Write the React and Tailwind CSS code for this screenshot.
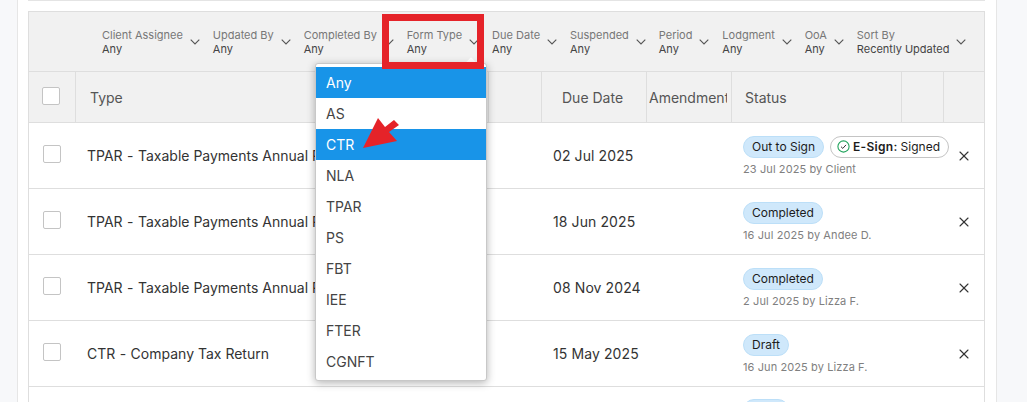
import React from "react";
import { X } from "lucide-react";

const filters = [
  { label: "Client Assignee", value: "Any" },
  { label: "Updated By", value: "Any" },
  { label: "Completed By", value: "Any" },
  { label: "Form Type", value: "Any" },
  { label: "Due Date", value: "Any" },
  { label: "Suspended", value: "Any" },
  { label: "Period", value: "Any" },
  { label: "Lodgment", value: "Any" },
  { label: "OoA", value: "Any" },
  { label: "Sort By", value: "Recently Updated" },
];

const rows = [
  { code: "TPAR", name: "Taxable Payments Annual Report", due: "02 Jul 2025", status: "Out to Sign", esign: true, note: "23 Jul 2025 by Client" },
  { code: "TPAR", name: "Taxable Payments Annual Report", due: "18 Jun 2025", status: "Completed", note: "16 Jul 2025 by Andee D." },
  { code: "TPAR", name: "Taxable Payments Annual Report", due: "08 Nov 2024", status: "Completed", note: "2 Jul 2025 by Lizza F." },
  { code: "CTR", name: "Company Tax Return", due: "15 May 2025", status: "Draft", note: "16 Jun 2025 by Lizza F." },
];

const options = ["Any", "AS", "CTR", "NLA", "TPAR", "PS", "FBT", "IEE", "FTER", "CGNFT"];

const Checkbox = ({ className }) => (
  <div className={`w-[18px] h-[18px] rounded-[2px] bg-white border border-[#c4c4c4] shrink-0 ${className}`} />
);

const Pill = ({ children }) => (
  <span className="inline-flex h-[22px] px-[8px] items-center rounded-full bg-[#cfe8fb] border border-[#bcdff8] text-[12px] text-[#1c1c1c] whitespace-nowrap">
    {children}
  </span>
);

const App = () => {
  return (
    <div className="relative w-[1027px] h-[402px] overflow-hidden bg-[#f7f8fa] text-[#444] font-['Inter',sans-serif]">
      <div className="ml-[17px] w-[980px] h-[402px] bg-white border-x border-[#e6e6e6] pl-[10px] pr-[11px]">
        <div className="h-[1px] bg-[#e4e4e4]" />
        <div className="mt-[10px] border-x border-[#dedede]">
          {/* filter bar */}
          <div className="h-[61px] flex items-center bg-[#f1f1f1] border-y border-[#dedede] pl-[73px]">
            {filters.map((f) => (
              <div key={f.label} className="flex items-center mr-[12.9px] whitespace-nowrap">
                <div className="text-[11px] leading-[14px]">
                  <div className="text-[#777]">{f.label}</div>
                  <div className="text-[#444]">{f.value}</div>
                </div>
                <svg width="10" height="6" viewBox="0 0 10 6" fill="none" className="ml-[7px] shrink-0">
                  <path d="M0.7 0.7 L5 5 L9.3 0.7" stroke="#555" strokeWidth="1.1" />
                </svg>
              </div>
            ))}
          </div>

          {/* column headers */}
          <div className="h-[51px] flex items-stretch bg-[#f1f1f1] border-b border-[#dedede] text-[14px] text-[#555]">
            <div className="w-[47px] flex items-center justify-center border-r border-[#dedede]">
              <Checkbox className="mb-[2px] mr-[2px]" />
            </div>
            <div className="w-[413px] flex items-center pl-[14px] border-r border-[#dedede]">Type</div>
            <div className="w-[53px] border-r border-[#dedede]" />
            <div className="w-[105px] flex items-center pl-[20px] border-r border-[#dedede]">Due Date</div>
            <div className="w-[85px] flex items-center pl-[2px] pr-[4px] border-r border-[#dedede]">
              <span className="overflow-hidden whitespace-nowrap">Amendment</span>
            </div>
            <div className="w-[170px] flex items-center pl-[13px] border-r border-[#dedede]">Status</div>
            <div className="w-[42px] border-r border-[#dedede]" />
            <div className="flex-1" />
          </div>

          {/* rows */}
          {rows.map((r, i) => (
            <div key={i} className="h-[66px] flex items-center border-b border-[#dedede] text-[#333]">
              <div className="w-[47px] flex justify-center">
                <Checkbox className="mb-[4px] mr-[2px]" />
              </div>
              <div className="w-[466px] pl-[11px] text-[14px] whitespace-nowrap overflow-hidden">
                {r.code} <span className="px-[0.5px]">-</span> {r.name}
              </div>
              <div className="w-[105px] pl-[11px] text-[14px] tracking-[0.1px]">{r.due}</div>
              <div className="w-[85px]" />
              <div className="w-[212px] pl-[11px]">
                <div className="flex items-center gap-[6px]">
                  <Pill>{r.status}</Pill>
                  {r.esign && (
                    <span className="h-[22px] pl-[6px] pr-[8px] flex items-center gap-[3px] rounded-full border border-[#c4c4c4] text-[12px] text-[#1c1c1c] whitespace-nowrap">
                      <svg width="13" height="13" viewBox="0 0 13 13" fill="none" className="shrink-0">
                        <circle cx="6.5" cy="6.5" r="5.6" stroke="#22a45d" strokeWidth="1.1" />
                        <path d="M4 6.7 L5.8 8.4 L9 4.9" stroke="#333" strokeWidth="1" />
                      </svg>
                      <b className="font-semibold tracking-[0.3px]">E-Sign:</b>
                      <span>Signed</span>
                    </span>
                  )}
                </div>
                <div className="mt-[4px] text-[11px] leading-[14px] tracking-[0.1px] text-[#808080] whitespace-nowrap">{r.note}</div>
              </div>
              <div className="flex-1 flex justify-center">
                <X size={16} strokeWidth={1.6} className="text-[#333]" />
              </div>
            </div>
          ))}

          {/* next row, only its pill's top shows */}
          <div className="ml-[714px] mt-[12px]">
            <span className="block w-[46px] h-[22px] rounded-full bg-[#cfe8fb] border border-[#bcdff8]" />
          </div>
        </div>
      </div>

      {/* dropdown menu */}
      <div className="absolute left-[467px] top-[59px] w-[8px] h-[8px] rotate-45 bg-white" />
      <div className="absolute left-[315px] top-[63px] w-[172px] h-[318px] pt-[3px] bg-white rounded-[3px] border border-[#c8c8c8] shadow-[0_2px_8px_rgba(0,0,0,0.3)] text-[14px] text-[#444]">
        {options.map((o, i) => (
          <div
            key={o}
            className={`h-[31px] flex items-center pl-[10px] ${i === 0 || i === 2 ? "bg-[#1894e8] text-white" : ""}`}
          >
            {o}
          </div>
        ))}
      </div>

      {/* annotations */}
      <div className="absolute left-[382px] top-[14px] w-[102px] h-[55px] border-[7px] border-[#e52329]" />
      <svg className="absolute left-[360px] top-[117px]" width="42" height="36" viewBox="0 0 42 36">
        <path d="M3 31 L18 1 L25 10 L34 3 L39 8 L29 15 L37 24 Z" fill="#e52329" />
      </svg>
    </div>
  );
};

export default App;
